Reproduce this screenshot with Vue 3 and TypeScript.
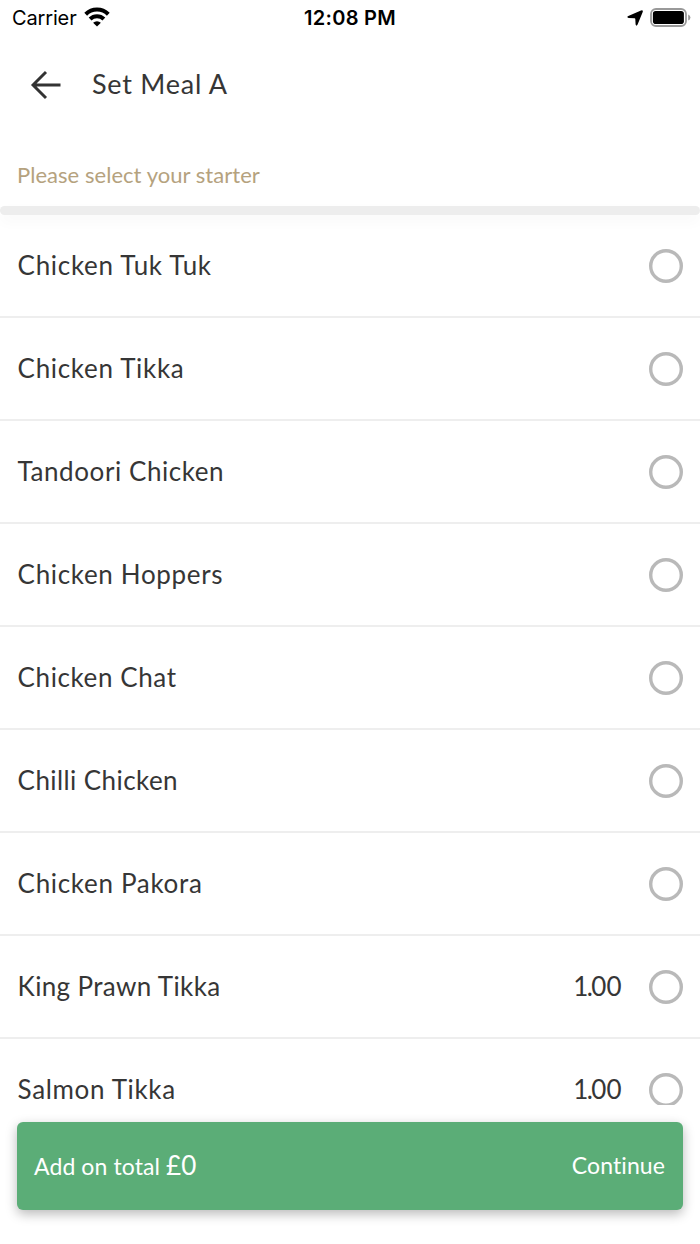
<script setup lang="ts">
interface Starter {
  name: string
  spacing: number
  price?: string
}

const starters: Starter[] = [
  { name: 'Chicken Tuk Tuk', spacing: 0.7 },
  { name: 'Chicken Tikka', spacing: 0.68 },
  { name: 'Tandoori Chicken', spacing: 0.57 },
  { name: 'Chicken Hoppers', spacing: 0.67 },
  { name: 'Chicken Chat', spacing: 0.6 },
  { name: 'Chilli Chicken', spacing: 0.42 },
  { name: 'Chicken Pakora', spacing: 0.68 },
  { name: 'King Prawn Tikka', spacing: 0.35, price: '1.00' },
  { name: 'Salmon Tikka', spacing: 0.65, price: '1.00' },
]
</script>

<template>
  <main class="screen">
    <div class="status">
      <div class="carrier">
        <span class="carrier-name">Carrier</span>
        <svg class="wifi" width="26" height="20" viewBox="0 0 26 20">
          <g fill="none" stroke="#000" stroke-width="4">
            <path d="M1.7 7.2A16.2 16.2 0 0 1 24.3 7.2" />
            <path d="M6.1 12A9.9 9.9 0 0 1 19.9 12" />
          </g>
          <path d="M13 19.4L9.1 15.8A5.7 5.7 0 0 1 16.9 15.8Z" />
        </svg>
      </div>
      <span class="clock">12:08 PM</span>
      <div class="power">
        <svg width="16" height="16" viewBox="0 0 16 16">
          <path d="M14 .5Q16.3 -.3 15.7 2L10.6 14.6Q9.4 16.8 8.6 14.6L8.3 8.9Q8.2 8.2 7.6 8.2L1.6 8Q-.8 7.3 1.3 5.9Z" />
        </svg>
        <svg width="41" height="20" viewBox="0 0 41 20">
          <rect x="1" y="1" width="35" height="17" rx="5" fill="#fff" stroke="#999" stroke-width="1.8" />
          <rect x="2.9" y="3" width="31" height="13" rx="2.8" />
          <path d="M38.2 6.4Q40.4 7.2 40.4 9.5T38.2 12.6Z" fill="#999" />
        </svg>
      </div>
    </div>

    <header class="header">
      <svg class="back" width="32" height="30" viewBox="0 0 32 30">
        <path d="M30.5 15H3M16 2L3 15L16 28" fill="none" stroke="#333" stroke-width="2.9" />
      </svg>
      <h1 class="title">Set Meal A</h1>
    </header>

    <p class="prompt"><span class="prompt-text">Please select your starter</span></p>
    <div class="divider"></div>

    <ul class="list">
      <li v-for="item in starters" :key="item.name" class="row">
        <span class="name" :style="{ letterSpacing: item.spacing + 'px' }">{{ item.name }}</span>
        <span v-if="item.price" class="price">{{ item.price }}</span>
        <svg class="radio" width="34" height="34" viewBox="0 0 34 34">
          <circle cx="17" cy="17" r="15.3" fill="none" stroke="#b9b9b9" stroke-width="3.4" />
        </svg>
      </li>
    </ul>

    <button class="action" type="button">
      <span class="total"><span class="total-label">Add on total </span><span class="amount">£0</span></span>
      <span class="continue">Continue</span>
    </button>
  </main>
</template>

<style>
body {
  background: #fff;
}
</style>

<style scoped>
.screen {
  display: flex;
  flex-direction: column;
  width: 700px;
  height: 1244px;
  overflow: hidden;
  background: #fff;
  color: #363636;
  font-family: Lato, "Open Sans", sans-serif;
}
.status {
  display: grid;
  grid-template-columns: 1fr auto 1fr;
  align-items: center;
  height: 36px;
  padding: 0 9px 0 12px;
  color: #000;
  font-family: Inter, "Liberation Sans", sans-serif;
  font-size: 20px;
  line-height: 36px;
}
.carrier {
  display: flex;
  align-items: center;
  gap: 7px;
}
.carrier-name {
  letter-spacing: -0.15px;
}
.wifi {
  margin-bottom: 3px;
}
.clock {
  margin-right: 3px;
  font-weight: 600;
  letter-spacing: 0.3px;
}
.power {
  display: flex;
  justify-content: flex-end;
  align-items: center;
  gap: 7px;
}
.header {
  display: flex;
  align-items: center;
  height: 98px;
  padding-left: 30px;
}
.title {
  margin: 0 0 2px 30px;
  font-size: 27px;
  font-weight: 400;
  line-height: 36px;
  letter-spacing: 0.75px;
}
.prompt {
  box-sizing: border-box;
  height: 72px;
  margin: 0;
  padding: 26px 17px 0;
  color: #b5a27e;
  font-size: 22px;
  line-height: 30px;
}
.prompt-text {
  letter-spacing: 0.04px;
}
.divider {
  flex: none;
  height: 9px;
  border-radius: 5px;
  background: #ededed;
  box-shadow: 0 6px 14px rgba(0, 0, 0, 0.035);
}
.list {
  flex: none;
  height: 890px;
  margin: 0;
  padding: 0;
  overflow: hidden;
  list-style: none;
}
.row {
  display: flex;
  align-items: center;
  box-sizing: border-box;
  height: 103px;
  padding: 0 17px;
  border-bottom: 2px solid #eee;
  font-size: 26px;
}
.name {
  flex: 1;
  margin-left: 0.6px;
  padding-bottom: 2px;
  white-space: nowrap;
}
.price {
  margin-right: 27.5px;
  padding-bottom: 2px;
}
.price::first-letter {
  letter-spacing: -1.6px;
}
.radio {
  flex: none;
}
.action {
  display: flex;
  flex: none;
  align-items: center;
  justify-content: space-between;
  height: 88px;
  margin: 17px 17px 0;
  padding: 0 18px 2px 17px;
  border: 0;
  border-radius: 6px;
  background: #5bad77;
  box-shadow: 0 4px 12px rgba(0, 0, 0, 0.28);
  color: #fff;
  font-family: inherit;
  font-size: 23px;
}
.total {
  white-space: pre;
}
.total-label {
  letter-spacing: 0.1px;
}
.amount {
  font-size: 26px;
}
.continue {
  letter-spacing: 0.1px;
  font-variant-ligatures: none;
}
</style>
